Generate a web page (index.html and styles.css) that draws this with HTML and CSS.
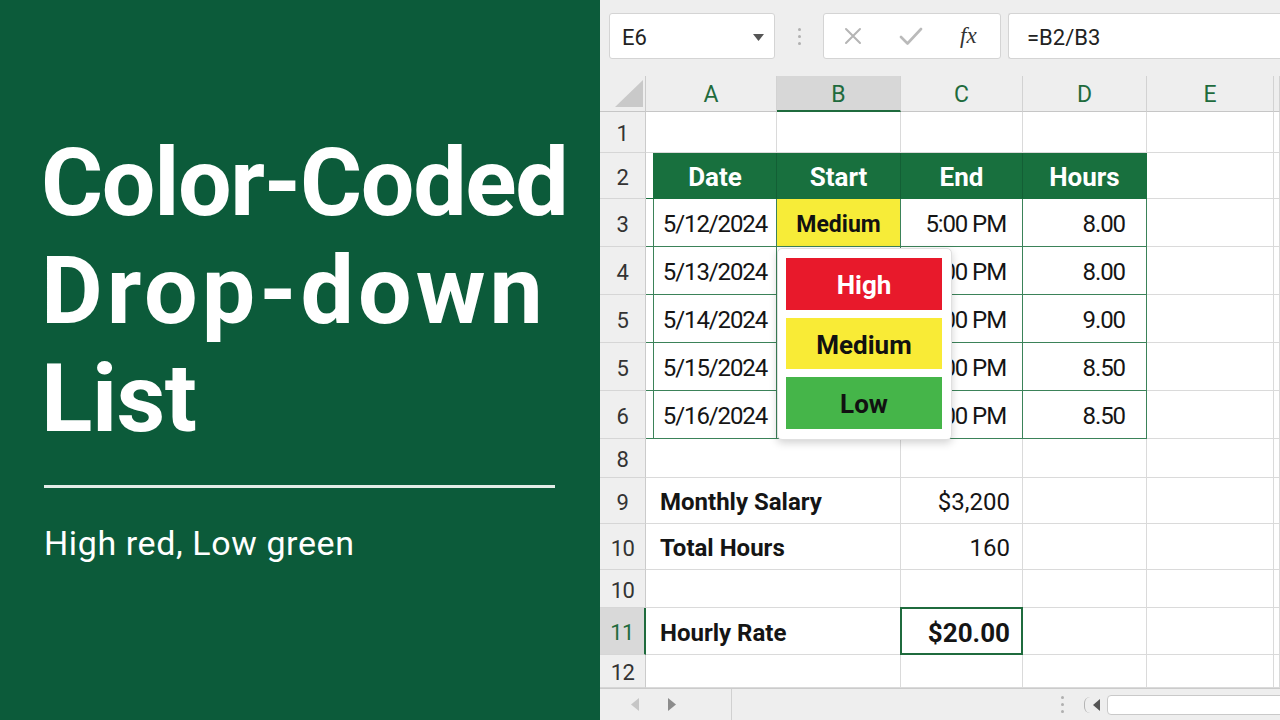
FILE: index.html
```html
<!DOCTYPE html>
<html lang="en">
<head>
<meta charset="utf-8">
<title>Color-Coded Drop-down List</title>
<link rel="stylesheet" href="styles.css">
</head>
<body>
<div class="page">
  <section class="hero">
    <h1 class="title"><span class="l1">Color-Coded</span><span class="l2">Drop-down</span><span class="l3">List</span></h1>
    <div class="rule"></div>
    <p class="sub">High red, Low green</p>
  </section>

  <section class="sheet">
    <div class="toolbar">
      <div class="namebox"><span>E6</span><svg width="11" height="7" viewBox="0 0 11 7"><path d="M0 0h11L5.5 7z" fill="#555"/></svg></div>
      <div class="grip"><i></i><i></i><i></i></div>
      <div class="fxbox">
        <svg class="ic-x" width="18" height="18" viewBox="0 0 18 18"><path d="M2 2l14 14M16 2L2 16" stroke="#b5b5b5" stroke-width="2" stroke-linecap="round"/></svg>
        <svg class="ic-ok" width="24" height="18" viewBox="0 0 24 18"><path d="M2 10l6.5 6.5L22 2" stroke="#bababa" stroke-width="2.6" fill="none" stroke-linecap="round" stroke-linejoin="round"/></svg>
        <span class="fx">fx</span>
      </div>
      <div class="formula">=B2/B3</div>
    </div>

    <div class="grid">
      <div class="row h36">
        <div class="c corner"><span class="tri"></span></div>
        <div class="c ch">A</div><div class="c ch on">B</div><div class="c ch">C</div><div class="c ch">D</div><div class="c ch">E</div><div class="c ch"></div>
      </div>
      <div class="row h41">
        <div class="c rh">1</div><div class="c"></div><div class="c"></div><div class="c"></div><div class="c"></div><div class="c"></div><div class="c"></div>
      </div>
      <div class="row h46">
        <div class="c rh">2</div>
        <div class="c ta hd"><div class="tbox">Date</div></div>
        <div class="c th">Start</div><div class="c th">End</div><div class="c th last">Hours</div>
        <div class="c"></div><div class="c"></div>
      </div>
      <div class="row h48">
        <div class="c rh">3</div>
        <div class="c ta"><div class="tbox">5/12/2024</div></div>
        <div class="c td yel">Medium
          <div class="dd">
            <div class="opt high">High</div>
            <div class="opt med">Medium</div>
            <div class="opt low">Low</div>
          </div>
        </div>
        <div class="c td pm">5:00 PM</div><div class="c td num">8.00</div>
        <div class="c"></div><div class="c"></div>
      </div>
      <div class="row h48">
        <div class="c rh">4</div>
        <div class="c ta"><div class="tbox">5/13/2024</div></div>
        <div class="c td"></div><div class="c td pm">5:00 PM</div><div class="c td num">8.00</div>
        <div class="c"></div><div class="c"></div>
      </div>
      <div class="row h48">
        <div class="c rh">5</div>
        <div class="c ta"><div class="tbox">5/14/2024</div></div>
        <div class="c td"></div><div class="c td pm">5:00 PM</div><div class="c td num">9.00</div>
        <div class="c"></div><div class="c"></div>
      </div>
      <div class="row h48">
        <div class="c rh">5</div>
        <div class="c ta"><div class="tbox">5/15/2024</div></div>
        <div class="c td"></div><div class="c td pm">5:00 PM</div><div class="c td num">8.50</div>
        <div class="c"></div><div class="c"></div>
      </div>
      <div class="row h48">
        <div class="c rh">6</div>
        <div class="c ta"><div class="tbox">5/16/2024</div></div>
        <div class="c td"></div><div class="c td pm">5:00 PM</div><div class="c td num">8.50</div>
        <div class="c"></div><div class="c"></div>
      </div>
      <div class="row h39">
        <div class="c rh">8</div>
        <div class="c span2"></div><div class="c"></div><div class="c"></div><div class="c"></div><div class="c"></div>
      </div>
      <div class="row h46">
        <div class="c rh">9</div>
        <div class="c span2 lbl">Monthly Salary</div><div class="c val">$3,200</div><div class="c"></div><div class="c"></div><div class="c"></div>
      </div>
      <div class="row h46">
        <div class="c rh">10</div>
        <div class="c span2 lbl">Total Hours</div><div class="c val">160</div><div class="c"></div><div class="c"></div><div class="c"></div>
      </div>
      <div class="row h38">
        <div class="c rh">10</div>
        <div class="c span2"></div><div class="c"></div><div class="c"></div><div class="c"></div><div class="c"></div>
      </div>
      <div class="row h47">
        <div class="c rh sel">11</div>
        <div class="c span2 lbl">Hourly Rate</div><div class="c val big active">$20.00</div><div class="c"></div><div class="c"></div><div class="c"></div>
      </div>
      <div class="row h33">
        <div class="c rh">12</div>
        <div class="c span2"></div><div class="c"></div><div class="c"></div><div class="c"></div><div class="c"></div>
      </div>
    </div>

    <div class="hscroll">
      <svg class="arr-l" width="8" height="13" viewBox="0 0 8 13"><path d="M8 0v13L0 6.5z" fill="#c6c6c6"/></svg>
      <svg class="arr-r" width="8" height="13" viewBox="0 0 8 13"><path d="M0 0v13l8-6.5z" fill="#8c8c8c"/></svg>
      <span class="sep"></span>
      <span class="dots"><i></i><i></i><i></i></span>
      <span class="paren"></span>
      <svg class="arr-s" width="7" height="12" viewBox="0 0 7 12"><path d="M7 0v12L0 6z" fill="#555"/></svg>
      <span class="track"></span>
    </div>
  </section>
</div>
</body>
</html>
```

FILE: styles.css
```css
* { box-sizing: border-box; }
html, body { margin: 0; padding: 0; }
body {
  width: 1280px;
  height: 720px;
  overflow: hidden;
  font-family: Roboto, "Liberation Sans", Arial, sans-serif;
  background: #ffffff;
}
.page {
  display: flex;
  width: 1280px;
  height: 720px;
}

/* ---------- left hero ---------- */
.hero {
  width: 600px;
  flex: none;
  background: #0c5b3a;
  color: #ffffff;
  padding: 129px 0 0 44px;
}
.title {
  margin: 0 0 0 -3px;
  font-size: 95px;
  line-height: 108px;
  font-weight: 700;
  letter-spacing: -0.5px;
}
.title span { display: block; white-space: nowrap; }
.title .l1 { letter-spacing: -1.3px; }
.title .l2 { letter-spacing: 4px; }
.rule {
  margin-top: 32px;
  width: 511px;
  height: 3px;
  background: #e3ece7;
}
.sub {
  margin: 35px 0 0 0;
  font-size: 34px;
  line-height: 40px;
  font-weight: 400;
  letter-spacing: 0.6px;
}

/* ---------- right sheet ---------- */
.sheet {
  width: 680px;
  flex: none;
  display: flex;
  flex-direction: column;
  background: #ffffff;
}
.toolbar {
  height: 76px;
  flex: none;
  display: flex;
  align-items: flex-start;
  padding: 13px 0 0 9px;
  background: #eeeeee;
  font-size: 22px;
  color: #222;
}
.namebox {
  width: 166px;
  height: 46px;
  flex: none;
  background: #fff;
  border: 1px solid #d4d4d4;
  border-radius: 3px;
  display: flex;
  align-items: center;
  justify-content: space-between;
  padding: 2px 10px 0 12px;
}
.grip {
  width: 14px;
  height: 46px;
  flex: none;
  margin-left: 17px;
  display: flex;
  flex-direction: column;
  align-items: center;
  justify-content: center;
  gap: 4px;
}
.grip i, .dots i {
  display: block;
  width: 3px;
  height: 3px;
  border-radius: 50%;
  background: #b0b0b0;
}
.fxbox {
  width: 178px;
  height: 46px;
  flex: none;
  margin-left: 17px;
  background: #fff;
  border: 1px solid #d4d4d4;
  border-radius: 3px;
  display: flex;
  align-items: center;
  padding-left: 20px;
}
.fxbox svg { flex: none; }
.ic-ok { margin-left: 37px; }
.fx {
  margin-left: 37px;
  font-family: "Liberation Serif", "DejaVu Serif", serif;
  font-style: italic;
  font-size: 23px;
  color: #333;
}
.formula {
  flex: 1;
  height: 46px;
  margin-left: 7px;
  background: #fff;
  border: 1px solid #d4d4d4;
  border-right: none;
  border-radius: 3px 0 0 3px;
  display: flex;
  align-items: center;
  padding: 2px 0 0 18px;
}

/* grid */
.grid { flex: none; }
.row {
  display: grid;
  grid-template-columns: 46px 131px 124px 122px 124px 127px 6px;
}
.h33 { height: 33px; }
.h36 { height: 36px; }
.h38 { height: 38px; }
.h39 { height: 39px; }
.h41 { height: 41px; }
.h46 { height: 46px; }
.h47 { height: 47px; }
.h48 { height: 48px; }

.c {
  border-right: 1px solid #dadada;
  border-bottom: 1px solid #dadada;
  display: flex;
  align-items: center;
  min-width: 0;
  white-space: nowrap;
  font-size: 24px;
  color: #151515;
  padding-top: 3px;
}
.c.span2 { grid-column: span 2; }

.c.corner {
  background: #eeeeee;
  justify-content: flex-end;
  align-items: flex-end;
  padding: 0 2px 4px 0;
  border-right-color: #cbcbcb;
  border-bottom-color: #c6c6c6;
}
.tri {
  display: block;
  width: 28px;
  height: 27px;
  background: #c9c9c9;
  clip-path: polygon(100% 0, 100% 100%, 0 100%);
}
.c.ch {
  background: #eeeeee;
  justify-content: center;
  color: #1f6b3d;
  font-size: 23px;
  padding-top: 2px;
  border-right-color: #d2d2d2;
  border-bottom-color: #c6c6c6;
}
.c.ch.on {
  background: #d7d7d7;
  border-bottom: 2px solid #1f6b3d;
}
.c.rh {
  background: #efefef;
  justify-content: center;
  color: #333;
  font-size: 22px;
  letter-spacing: -0.5px;
  border-right-color: #cbcbcb;
  border-bottom-color: #d6d6d6;
}
.c.rh.sel {
  background: #d9d9d9;
  color: #1f6b3d;
  border-right: 2px solid #1f6b3d;
}

/* table */
.c.ta {
  padding: 0 0 0 7px;
  align-items: stretch;
  border-right-color: #3b8259;
  border-bottom-color: #3b8259;
}
.tbox {
  flex: 1;
  border-left: 1px solid #3b8259;
  display: flex;
  align-items: center;
  justify-content: center;
  padding-top: 3px;
  letter-spacing: -1.1px;
}
.c.ta.hd { border-right-color: #135f35; border-bottom-color: #18703e; }
.c.ta.hd .tbox {
  background: #18703e;
  border-left-color: #18703e;
  color: #fff;
  font-weight: 700;
  font-size: 26px;
  padding-top: 2px;
  letter-spacing: 0;
}
.c.th {
  background: #18703e;
  color: #fff;
  font-weight: 700;
  font-size: 26px;
  padding-top: 2px;
  justify-content: center;
  border-right-color: #135f35;
  border-bottom-color: #18703e;
}
.c.th.last { border-right-color: #18703e; }
.c.td {
  border-right-color: #3b8259;
  border-bottom-color: #3b8259;
  letter-spacing: -1.1px;
}
.c.pm { justify-content: flex-end; padding-right: 16px; }
.c.num { justify-content: flex-end; padding-right: 21px; }
.c.yel {
  position: relative;
  background: #f7ec38;
  justify-content: center;
  font-size: 23px;
  font-weight: 700;
  letter-spacing: 0;
  color: #111;
}

/* dropdown */
.dd {
  position: absolute;
  left: 0;
  top: calc(100% + 2px);
  width: 175px;
  height: 192px;
  background: #fff;
  border: 1px solid #e0e0e0;
  border-radius: 5px;
  box-shadow: 0 3px 8px rgba(0, 0, 0, 0.18);
  padding: 9px 9px 10px 8px;
  display: flex;
  flex-direction: column;
  gap: 8px;
  z-index: 5;
}
.opt {
  height: 52px;
  flex: none;
  display: flex;
  align-items: center;
  justify-content: center;
  padding-top: 2px;
  font-size: 26px;
  font-weight: 700;
  letter-spacing: 0;
  color: #111;
}
.opt.med { height: 51px; background: #f9eb36; }
.opt.high { background: #e8192b; color: #fff; }
.opt.low { background: #45b549; }

/* summary */
.c.lbl { padding-left: 14px; font-weight: 700; font-size: 24px; }
.c.val { justify-content: flex-end; padding-right: 12px; }
.c.val.big { font-weight: 700; font-size: 26px; }
.c.active { position: relative; }
.c.active::after {
  content: "";
  position: absolute;
  left: -1px;
  right: -1px;
  top: -1px;
  bottom: -1px;
  border: 2px solid #1f6b3d;
}

/* bottom scroll bar */
.hscroll {
  flex: 1;
  display: flex;
  align-items: center;
  overflow: hidden;
  background: #eeeeee;
  border-top: 1px solid #cbcbcb;
  padding-left: 31px;
}
.hscroll > * { flex: none; }
.arr-r { margin-left: 29px; }
.sep {
  align-self: stretch;
  width: 1px;
  margin-left: 55px;
  background: #d0d0d0;
}
.dots {
  margin-left: 329px;
  display: flex;
  flex-direction: column;
  gap: 4px;
}
.paren {
  width: 6px;
  height: 16px;
  margin-left: 20px;
  border-left: 1.5px solid #b5b5b5;
  border-radius: 8px 0 0 8px;
}
.arr-s { margin-left: 3px; }
.track {
  width: 190px;
  height: 20px;
  margin-left: 7px;
  background: #fff;
  border: 1px solid #c9c9c9;
  border-radius: 4px;
}
```
